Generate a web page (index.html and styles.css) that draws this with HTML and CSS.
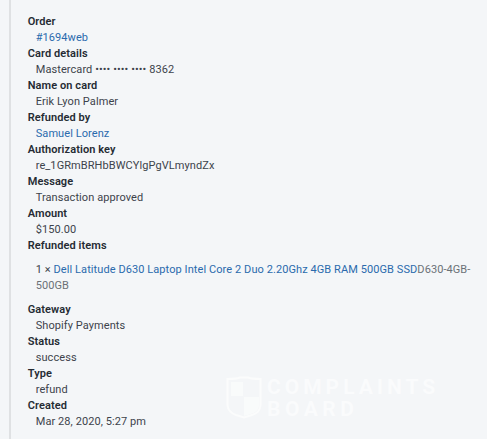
FILE: index.html
```
<!DOCTYPE html>
<html lang="en">
<head>
    <meta charset="UTF-8" />
    <title>Refund details</title>

    <link rel="stylesheet" href="styles.css">
</head>
<body>
    <div class="details">
        <dl class="list">
            <dt>Order</dt>
            <dd><a href="#">#1694web</a></dd>
            <dt>Card details</dt>
            <dd>Mastercard •••• •••• •••• 8362</dd>
            <dt>Name on card</dt>
            <dd>Erik Lyon Palmer</dd>
            <dt>Refunded by</dt>
            <dd><a href="#">Samuel Lorenz</a></dd>
            <dt>Authorization key</dt>
            <dd>re_1GRmBRHbBWCYlgPgVLmyndZx</dd>
            <dt>Message</dt>
            <dd>Transaction approved</dd>
            <dt>Amount</dt>
            <dd>$150.00</dd>
            <dt>Refunded items</dt>
            <dd class="items">1 × <a href="#">Dell Latitude D630 Laptop Intel Core 2 Duo 2.20Ghz 4GB RAM 500GB SSD</a><span class="sku">D630-4GB-500GB</span></dd>
            <dt>Gateway</dt>
            <dd>Shopify Payments</dd>
            <dt>Status</dt>
            <dd>success</dd>
            <dt>Type</dt>
            <dd>refund</dd>
            <dt>Created</dt>
            <dd>Mar 28, 2020, 5:27 pm</dd>
        </dl>
    </div>

    <div class="watermark">
        <svg class="shield" width="36" height="43" viewBox="0 0 36 43">
            <path d="M1.5 3 Q10 3 14 1.5 H22 Q26 3 34.5 3 V29 Q34 37 26 39 L18 41.5 L10 39 Q2 36 1.5 29 Z" fill="none" stroke="#fbfcfc" stroke-width="2" />
            <path d="M5 6 H17 V20 H5 Z M18 21 H33 V30 Q32 36 25 38 L18 40 Z" fill="#f9fbfb" />
        </svg>
        <div class="brand">
            <span class="brand-top">COMPLAINTS</span>
            <span class="brand-bottom">BOARD</span>
        </div>
    </div>
</body>
</html>
```

FILE: styles.css
```
body {
    font-family: Roboto, Arial, sans-serif;
    font-size: 11px;
    line-height: 16px;
    letter-spacing: 0.08px;
    margin: 0;
    padding-left: 9px;
    background-color: #f4f6f8;
    color: #3d434b;
    overflow: hidden;
}

.details {
    height: 439px;
    box-sizing: border-box;
    padding: 14px 8px 0 17px;
    border-left: 2px solid #dfe1e3;
}

.list {
    margin: 0 0 0 -0.3px;
}

dt {
    font-weight: 600;
    color: #252b33;
}

dd {
    margin: 0 0 0 8px;
}

a {
    color: #2a6aad;
    text-decoration: none;
}

.items {
    margin: 8px 0;
    padding-left: 8px;
}

.sku {
    color: #6b7177;
}

/* faint logo over the bottom right corner */
.watermark {
    position: absolute;
    left: 226px;
    top: 376px;
    display: flex;
    gap: 5px;
    pointer-events: none;
}

.brand {
    display: flex;
    flex-direction: column;
    font-size: 21px;
    font-weight: 700;
    line-height: 22px;
    color: #fafbfc;
}

.brand-top {
    letter-spacing: 4px;
}

.brand-bottom {
    letter-spacing: 4.5px;
}
```
